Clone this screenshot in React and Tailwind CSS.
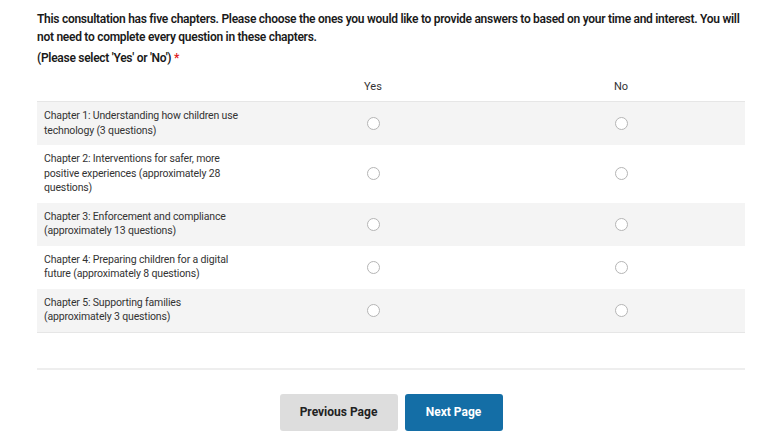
import React from "react";

const chapters = [
  "Chapter 1: Understanding how children use technology (3 questions)",
  "Chapter 2: Interventions for safer, more positive experiences (approximately 28 questions)",
  "Chapter 3: Enforcement and compliance (approximately 13 questions)",
  "Chapter 4: Preparing children for a digital future (approximately 8 questions)",
  "Chapter 5: Supporting families (approximately 3 questions)",
];

function Radio() {
  return (
    <span className="block w-[13px] h-[13px] rounded-full border border-[#b5b5b5] bg-white" />
  );
}

export default function App() {
  return (
    <div
      className="bg-white min-h-screen text-[#222]"
      style={{ fontFamily: "Roboto, 'Liberation Sans', sans-serif" }}
    >
      <div className="w-[708px] ml-[37px] pt-[10px]">
        <p className="text-[12px] leading-[18px] font-semibold tracking-[-0.28px] text-[#1a1a1a]">
          This consultation has five chapters. Please choose the ones you would like to provide answers to based on your time and interest. You will not need to complete every question in these chapters.
        </p>
        <p className="mt-[4px] text-[12px] leading-[16px] font-semibold tracking-[-0.28px] text-[#1a1a1a]">
          (Please select 'Yes' or 'No') <span className="text-[#e02020]">*</span>
        </p>

        <div className="mt-[6px] grid grid-cols-[212px_248px_248px] text-[11px] leading-[15px] text-[#333]">
          <div className="h-[29px]" />
          <div className="h-[29px] flex items-center justify-center">Yes</div>
          <div className="h-[29px] flex items-center justify-center">No</div>
        </div>

        <div className="border-t border-b border-[#e6e6e6]">
          {chapters.map((c, i) => (
            <div
              key={i}
              className={`grid grid-cols-[212px_248px_248px] text-[10.5px] leading-[14.5px] tracking-[-0.15px] text-[#333] ${
                i % 2 === 0 ? "bg-[#f4f4f4]" : "bg-white"
              }`}
            >
              <div className="pl-[7px] pr-0 py-[7px]">{c}</div>
              <div className="flex items-center justify-center">
                <Radio />
              </div>
              <div className="flex items-center justify-center">
                <Radio />
              </div>
            </div>
          ))}
        </div>

        <div className="mt-[35px] border-t-2 border-[#eeeeee]" />

        <div className="mt-[24px] flex justify-center gap-[7px]">
          <button className="w-[118px] h-[37px] rounded-[3px] bg-[#dddddd] text-[12px] font-bold text-[#222]">
            Previous Page
          </button>
          <button className="w-[98px] h-[37px] rounded-[3px] bg-[#146ea6] text-[12px] font-bold text-white">
            Next Page
          </button>
        </div>
      </div>
    </div>
  );
}
